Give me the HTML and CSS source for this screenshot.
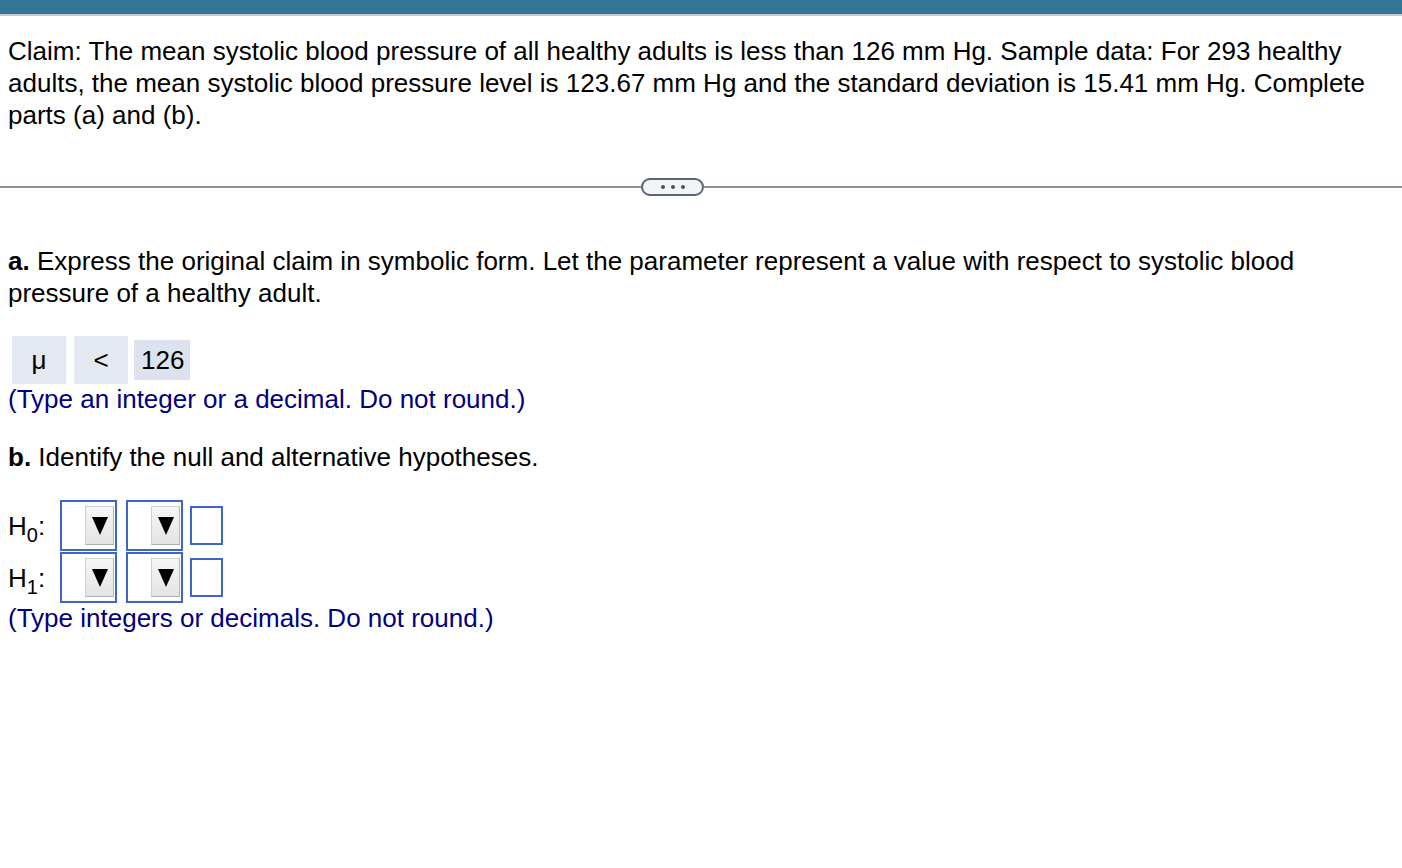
FILE: index.html
```html
<!DOCTYPE html>
<html>
<head>
<meta charset="utf-8">
<link rel="stylesheet" href="styles.css">
</head>
<body>
<div class="topbar"></div>
<div class="topline"></div>
<div class="content">
  <p class="claim">Claim: The mean systolic blood pressure of all healthy adults is less than 126 mm Hg. Sample data: For 293 healthy adults, the mean systolic blood pressure level is 123.67 mm Hg and the standard deviation is 15.41 mm Hg. Complete parts (a) and (b).</p>
</div>
<div class="sep">
  <div class="sep-line left"></div>
  <div class="more"><span></span><span></span><span></span></div>
  <div class="sep-line right"></div>
</div>
<div class="content">
  <p class="qa"><b>a.</b> Express the original claim in symbolic form. Let the parameter represent a value with respect to systolic blood pressure of a healthy adult.</p>
  <div class="symrow">
    <div class="sym">μ</div>
    <div class="sym">&lt;</div>
    <div class="val">126</div>
  </div>
  <p class="hint">(Type an integer or a decimal. Do not round.)</p>
  <p class="qb"><b>b.</b> Identify the null and alternative hypotheses.</p>
  <div class="hyp">
    <div class="hrow">
      <div class="hlabel">H<sub>0</sub>:</div>
      <div class="dd"><div class="ddbtn"><span class="tri"></span></div></div>
      <div class="dd"><div class="ddbtn"><span class="tri"></span></div></div>
      <div class="inp"></div>
    </div>
    <div class="hrow">
      <div class="hlabel">H<sub>1</sub>:</div>
      <div class="dd"><div class="ddbtn"><span class="tri"></span></div></div>
      <div class="dd"><div class="ddbtn"><span class="tri"></span></div></div>
      <div class="inp"></div>
    </div>
  </div>
  <p class="hint">(Type integers or decimals. Do not round.)</p>
</div>
</body>
</html>
```
FILE: styles.css
```css
html, body {
  margin: 0;
  padding: 0;
  background: #ffffff;
}
body {
  font-family: "Liberation Sans", Arial, Helvetica, sans-serif;
  font-size: 26px;
  line-height: 32px;
  color: #000;
}
.topbar {
  height: 14px;
  background: #347696;
}
.topline {
  height: 2px;
  background: #c5c9d9;
}
.content {
  padding: 0 8px;
}
p {
  margin: 0;
}
.claim {
  padding-top: 19px;
}
.sep {
  display: flex;
  align-items: center;
  margin-top: 47px;
  height: 18px;
}
.sep-line {
  height: 2px;
  background: #8a93a0;
}
.sep-line.left {
  flex: 641;
}
.sep-line.right {
  flex: 698;
}
.more {
  width: 59px;
  height: 14px;
  border: 2px solid #5a6573;
  border-radius: 9px;
  background: #f2f4f6;
  display: flex;
  justify-content: center;
  align-items: center;
  gap: 6px;
}
.more span {
  width: 4px;
  height: 4px;
  border-radius: 50%;
  background: #4a5260;
}
.qa {
  margin-top: 49px;
}
.symrow {
  display: flex;
  align-items: center;
  gap: 8px;
  margin-top: 27px;
  padding-left: 4px;
}
.sym {
  width: 54px;
  height: 48px;
  background: #e4e8f0;
  display: flex;
  align-items: center;
  justify-content: center;
}
.val {
  margin-left: -2px;
  height: 40px;
  padding: 0 6px 0 7px;
  background: #dce3ee;
  display: flex;
  align-items: center;
}
.hint {
  color: #000080;
  margin-top: -1px;
}
.qb {
  margin-top: 26px;
}
.hyp {
  margin-top: 27px;
  display: flex;
  flex-direction: column;
  gap: 1px;
}
.hrow {
  display: flex;
  align-items: center;
  height: 51px;
}
.hlabel {
  width: 52px;
  line-height: 32px;
}
.hlabel sub {
  font-size: 20px;
  vertical-align: -7px;
  line-height: 0;
}
.dd {
  width: 52px;
  height: 47px;
  border: 2px solid #3f65c8;
  background: #fff;
  margin-right: 9px;
  display: flex;
  align-items: center;
  justify-content: flex-end;
  padding-right: 1px;
  box-sizing: content-box;
}
.ddbtn {
  width: 29px;
  height: 39px;
  box-sizing: border-box;
  border: 1px solid #d0d0d0;
  border-right-color: #b8b8b8;
  border-bottom-color: #b0b0b0;
  background: linear-gradient(#f6f6f6, #e4e4e4);
  display: flex;
  align-items: center;
  justify-content: center;
}
.tri {
  width: 0;
  height: 0;
  border-left: 8px solid transparent;
  border-right: 8px solid transparent;
  border-top: 18px solid #000;
}
.inp {
  width: 29px;
  height: 35px;
  border: 2px solid #3f65c8;
  background: #fff;
  margin-left: -2px;
}
```
